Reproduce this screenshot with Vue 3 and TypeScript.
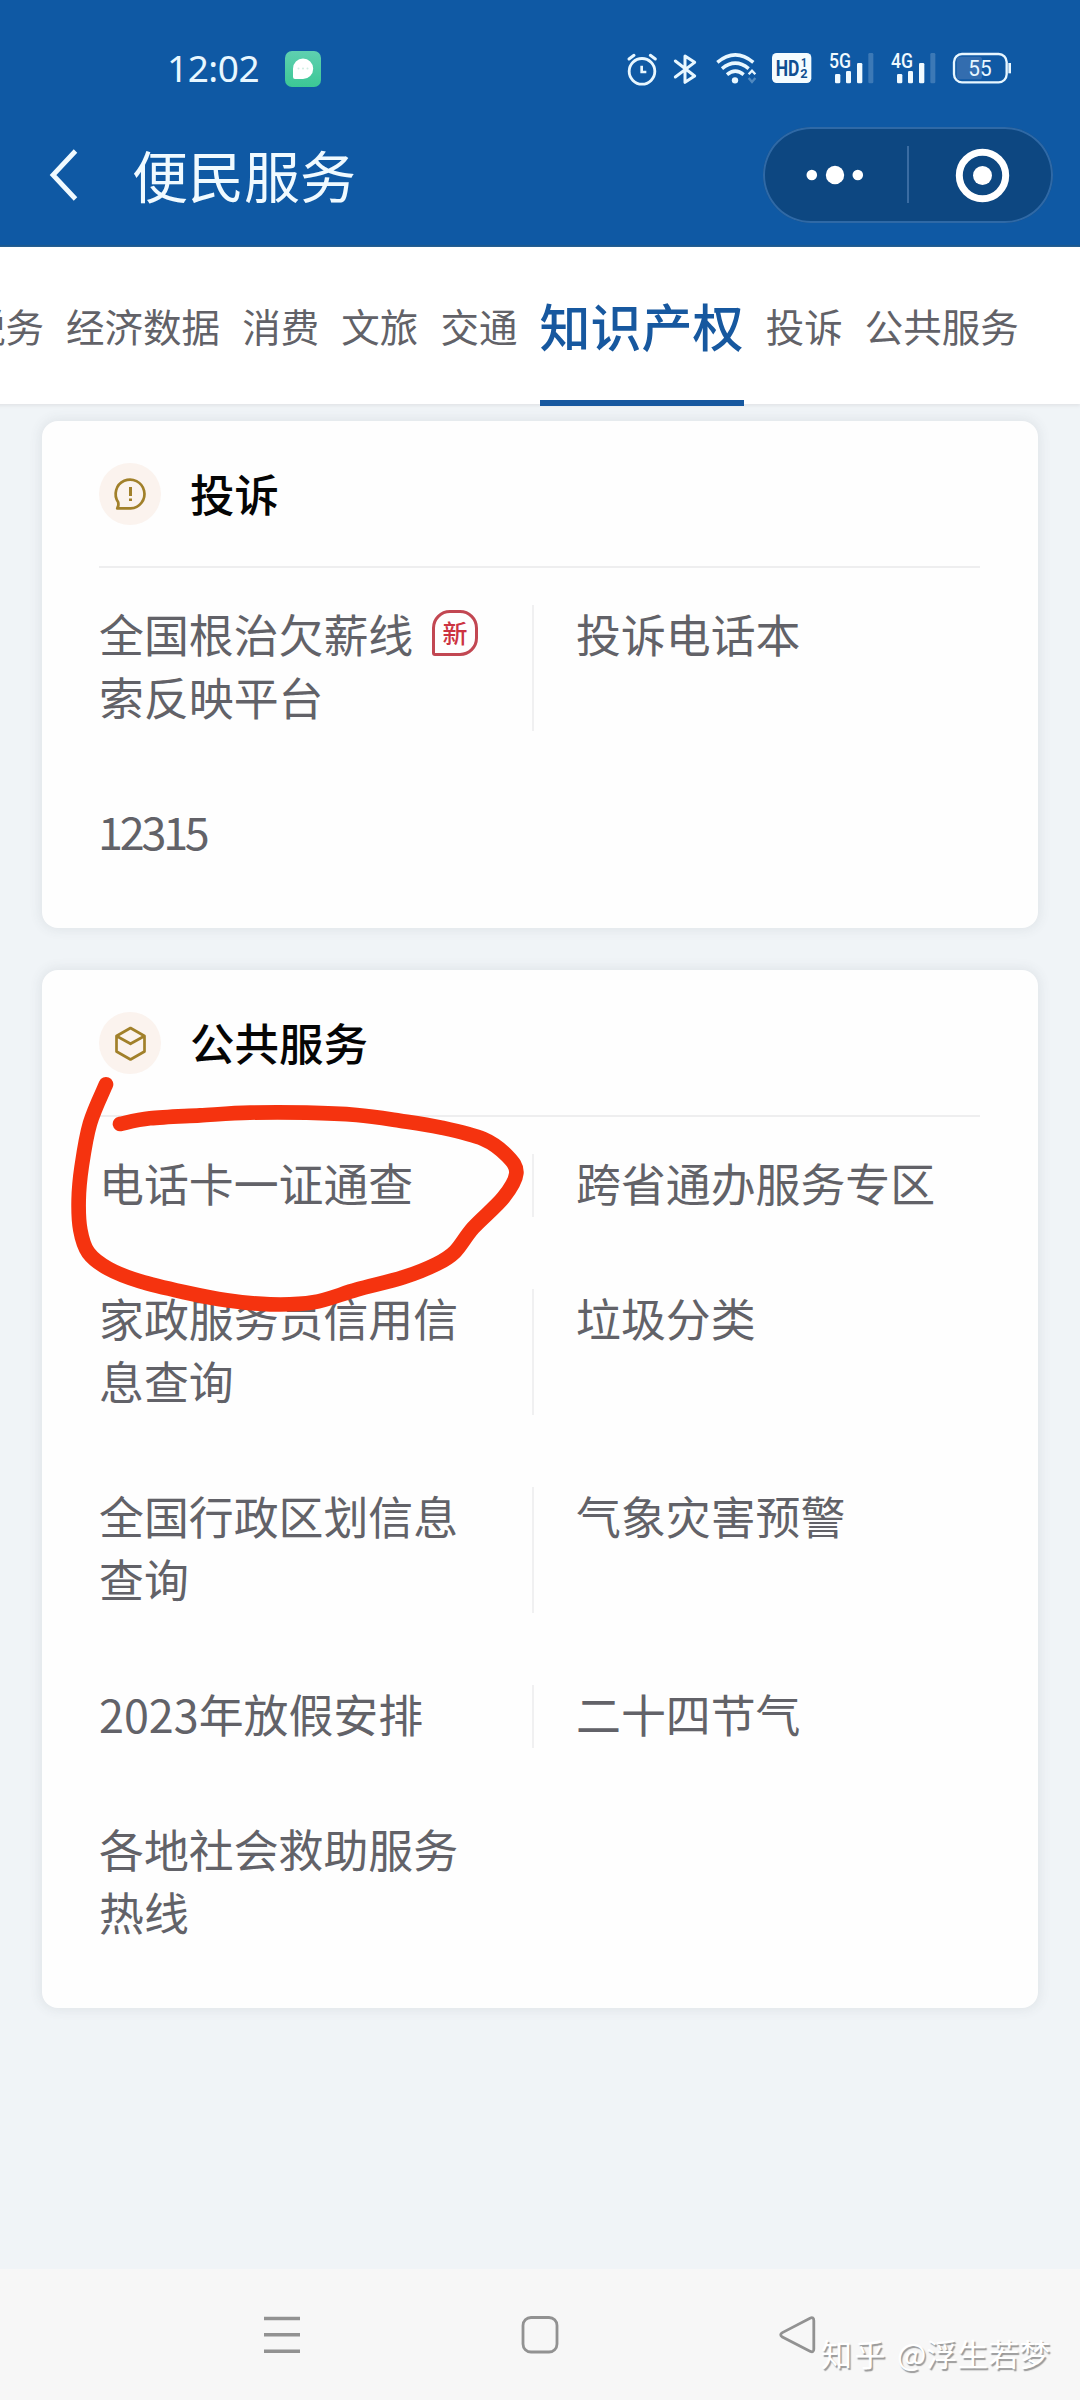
<script setup lang="ts">
interface ServiceItem {
  label: string
  isNew?: boolean
  numeric?: boolean
}

interface ServiceSection {
  title: string
  icon: 'complaint' | 'box'
  rows: ServiceItem[][]
}

const tabs: string[] = ['税务', '经济数据', '消费', '文旅', '交通', '知识产权', '投诉', '公共服务']
const activeTab = '知识产权'

const sections: ServiceSection[] = [
  {
    title: '投诉',
    icon: 'complaint',
    rows: [
      [{ label: '全国根治欠薪线索反映平台', isNew: true }, { label: '投诉电话本' }],
      [{ label: '12315', numeric: true }],
    ],
  },
  {
    title: '公共服务',
    icon: 'box',
    rows: [
      [{ label: '电话卡一证通查' }, { label: '跨省通办服务专区' }],
      [{ label: '家政服务员信用信息查询' }, { label: '垃圾分类' }],
      [{ label: '全国行政区划信息查询' }, { label: '气象灾害预警' }],
      [{ label: '2023年放假安排' }, { label: '二十四节气' }],
      [{ label: '各地社会救助服务热线' }],
    ],
  },
]

// Points of the hand-drawn marker stroke
const strokePoints: [number, number][] = [
  [198, 373], [150, 490], [125, 620], [116, 720], [121, 810], [145, 878], [205, 926],
  [300, 964], [430, 996], [560, 1021], [690, 1033], [820, 1027], [950, 989], [1090, 952],
  [1190, 912], [1245, 875], [1300, 803], [1390, 713], [1429, 640], [1402, 588], [1330, 537],
  [1200, 502], [1080, 482], [950, 465], [800, 458], [630, 458], [480, 466], [330, 475], [240, 492],
]

// Catmull-Rom spline through the points, written as cubic Béziers
function smooth(p: [number, number][]): string {
  let d = `M${p[0][0]} ${p[0][1]}`
  for (let i = 0; i < p.length - 1; i++) {
    const a = p[Math.max(i - 1, 0)]
    const b = p[i]
    const c = p[i + 1]
    const e = p[Math.min(i + 2, p.length - 1)]
    d += `C${b[0] + (c[0] - a[0]) / 6} ${b[1] + (c[1] - a[1]) / 6} ${c[0] - (e[0] - b[0]) / 6} ${c[1] - (e[1] - b[1]) / 6} ${c[0]} ${c[1]}`
  }
  return d
}
const markerPath = smooth(strokePoints)
</script>

<template>
  <div class="screen">
    <header class="header">
      <div class="status">
        <span class="clock">12:02</span>
        <svg class="msg" viewBox="0 0 36 36">
          <defs>
            <linearGradient id="msgbg" x1="0" y1="0" x2="0" y2="1">
              <stop offset="0" stop-color="#5fd0b0" />
              <stop offset="1" stop-color="#3cc795" />
            </linearGradient>
          </defs>
          <rect width="36" height="36" rx="7" fill="url(#msgbg)" />
          <path d="M18 7.5a10.2 10.2 0 1 1 0 20.4H10a2 2 0 0 1-2-2V17.7A10.2 10.2 0 0 1 18 7.5z" fill="#fff" />
          <g fill="#cfeee2"><circle cx="13.5" cy="17.5" r="1" /><circle cx="18" cy="17.5" r="1" /><circle cx="22.5" cy="17.5" r="1" /></g>
        </svg>
        <div class="indicators">
          <svg width="32" height="40" viewBox="18 30 96 120" fill="none" stroke="#e8f7ff" stroke-linecap="round">
            <circle cx="66" cy="94" r="38.5" stroke-width="8.5" />
            <path d="M27 57L42 46M91 46L106 57" stroke-width="9" />
            <path d="M65 77V96H79" stroke-width="8" stroke-linecap="butt" />
          </svg>
          <svg class="bt" width="26" height="40" viewBox="156 30 78 120" fill="none" stroke="#e8f7ff" stroke-width="9">
            <path d="M166 63L224 108L195 127V48L224 67L166 111" stroke-linejoin="round" stroke-linecap="round" />
          </svg>
          <svg class="wifi" width="43" height="40" viewBox="285 30 129 120" fill="none" stroke="#e8f7ff" stroke-width="10.5">
            <path d="M292 67Q346 22 400 67M306 86Q346 53 386 86M321 104Q346 83 371 104" />
            <circle cx="345" cy="121" r="9.5" fill="#e8f7ff" stroke="none" />
            <path d="M386 103L396 92L406 103" stroke-width="7" />
            <path d="M386 114L396 126L406 114" stroke-width="7" opacity=".3" />
          </svg>
          <svg class="hd" width="41" height="40" viewBox="453 30 123 120">
            <rect x="456" y="39" width="118" height="90" rx="14" fill="#f4fcff" />
            <text x="467" y="108" font-size="67" font-weight="700" textLength="71" lengthAdjust="spacingAndGlyphs" fill="#0f4f91">HD</text>
            <text x="543" y="80" font-size="38" font-weight="700" textLength="18" lengthAdjust="spacingAndGlyphs" fill="#0f4f91">1</text>
            <text x="541" y="115" font-size="38" font-weight="700" textLength="22" lengthAdjust="spacingAndGlyphs" fill="#0f4f91">2</text>
          </svg>
          <svg class="sig5" width="47" height="40" viewBox="624 30 141 120" fill="#f0faff">
            <text x="627" y="83" font-size="59" font-weight="500" textLength="66" lengthAdjust="spacingAndGlyphs">5G</text>
            <rect x="645" y="102" width="16" height="28" rx="4" /><rect x="678" y="93" width="15" height="37" rx="4" />
            <rect x="711" y="69" width="16" height="61" rx="4" /><rect x="745" y="39" width="15" height="91" rx="4" opacity=".2" />
          </svg>
          <svg class="sig4" width="47" height="40" viewBox="810 30 141 120" fill="#f0faff">
            <text x="813" y="83" font-size="59" font-weight="500" textLength="66" lengthAdjust="spacingAndGlyphs">4G</text>
            <rect x="831" y="102" width="16" height="28" rx="4" /><rect x="864" y="93" width="15" height="37" rx="4" />
            <rect x="897" y="69" width="16" height="61" rx="4" /><rect x="931" y="39" width="15" height="91" rx="4" opacity=".2" />
          </svg>
          <svg class="bat" width="60" height="40" viewBox="996 30 180 120">
            <rect x="1010" y="50" width="76" height="68" rx="8" fill="#336daf" />
            <rect x="1002" y="42" width="158" height="85" rx="24" fill="none" stroke="#e8f7ff" stroke-width="7" />
            <rect x="1165" y="69" width="8" height="31" fill="#e8f7ff" />
            <text x="1045" y="107" font-size="64" textLength="70" lengthAdjust="spacingAndGlyphs" fill="#e8f7ff">55</text>
          </svg>
        </div>
      </div>
      <div class="titlebar">
        <svg class="back" viewBox="0 0 30 56"><path d="M25.5 4L3 28L25.5 52" fill="none" stroke="#f0faff" stroke-width="4.8" /></svg>
        <h1>便民服务</h1>
        <div class="capsule">
          <svg width="290" height="96" viewBox="0 0 290 96" fill="#fff">
            <circle cx="48.8" cy="48" r="5.3" /><circle cx="72" cy="48" r="9.2" /><circle cx="94.8" cy="48" r="5.3" />
            <rect x="144" y="19" width="2" height="57" fill="#3a6ca2" />
            <circle cx="219.5" cy="48.5" r="23.2" fill="none" stroke="#fff" stroke-width="7" />
            <circle cx="219.5" cy="48.5" r="9.5" />
          </svg>
        </div>
      </div>
    </header>

    <nav class="tabs">
      <span v-for="t in tabs" :key="t" class="tab" :class="{ active: t === activeTab }"><b>{{ t }}</b></span>
    </nav>

    <main class="content">
      <section v-for="s in sections" :key="s.title" class="card">
        <div class="card-head">
          <span class="badge">
            <svg v-if="s.icon === 'complaint'" width="62" height="62" viewBox="0 0 62 62" fill="none" stroke="#a1802a" stroke-width="2.7">
              <path d="M19.2 39.2A14.4 14.4 0 1 1 31.6 45.4H18.2Q20 43 19.2 39.2z" stroke-linejoin="round" />
              <path d="M31.5 24V33M31.5 35.5V38" stroke-width="3" />
            </svg>
            <svg v-else width="62" height="62" viewBox="0 0 62 62" fill="none" stroke="#a1802a" stroke-width="2.7" stroke-linejoin="round">
              <path d="M31.5 16L45.5 24V39.5L31.5 47.5L17.5 39.5V24z M17.5 24L31.5 31.8L45.5 24" />
            </svg>
          </span>
          <h2>{{ s.title }}</h2>
        </div>
        <div class="rows">
          <div v-for="(row, i) in s.rows" :key="i" class="row">
            <div v-for="item in row" :key="item.label" class="item">
              <span class="label" :class="{ narrow: item.isNew, numeric: item.numeric }">{{ item.label }}</span>
              <span v-if="item.isNew" class="new">新</span>
            </div>
          </div>
        </div>
      </section>
    </main>

    <svg class="marker" width="520" height="460" viewBox="0 0 1560 1380">
      <path :d="markerPath" fill="none" stroke="#f5330f" stroke-width="44" stroke-linecap="round" stroke-linejoin="round" />
    </svg>

    <footer class="sysnav">
      <svg width="40" height="40" viewBox="0 0 40 40" stroke="#929292" stroke-width="3.4"><path d="M2 3.5H38M2 19.8H38M2 36.2H38" /></svg>
      <svg width="40" height="40" viewBox="0 0 40 40" fill="none" stroke="#929292" stroke-width="2.8"><rect x="3" y="2.5" width="34" height="34.5" rx="8" /></svg>
      <svg width="40" height="40" viewBox="0 0 40 40" fill="none" stroke="#929292" stroke-width="2.8"><path d="M32 3.2Q35.8 1.6 35.8 5.6V34.1Q35.8 38.1 32 36.2L4.4 22.1Q1 19.8 4.4 17.6z" /></svg>
      <div class="watermark"><span class="site">知乎</span><span>@浮生若梦</span></div>
    </footer>
  </div>
</template>

<style>
body {
  margin: 0;
  background: #f0f4f7;
}
</style>

<style scoped>
.screen {
  position: relative;
  width: 1080px;
  height: 2400px;
  overflow: hidden;
  display: flex;
  flex-direction: column;
  background: #f0f4f7;
  font-family: "Noto Sans CJK SC", "Noto Sans", sans-serif;
  color: #626268;
}
svg {
  display: block;
  flex: none;
  overflow: visible;
}
svg text {
  font-family: Roboto, sans-serif;
}
.header {
  height: 247px;
  background: #0f59a4;
  box-sizing: border-box;
  border-bottom: 2px solid #1b588f;
  flex: none;
}
.status {
  height: 40px;
  padding: 50px 68px 0 167px;
  display: flex;
  align-items: center;
}
.clock {
  font-family: "Noto Sans", sans-serif;
  font-size: 37px;
  line-height: 40px;
  width: 118px;
  margin-bottom: 5px;
  color: #e8f7ff;
  letter-spacing: -0.5px;
}
.msg {
  width: 36px;
  height: 36px;
  margin-bottom: 2px;
}
.indicators {
  display: flex;
  margin-left: auto;
}
.bt { margin-left: 14px; }
.wifi { margin-left: 17px; }
.hd { margin-left: 13px; }
.sig5 { margin-left: 16px; }
.sig4 { margin-left: 15px; }
.bat { margin-left: 15px; }
.titlebar {
  height: 96px;
  margin-top: 37px;
  padding: 0 27px 0 50px;
  display: flex;
  align-items: center;
}
.back {
  width: 30px;
  height: 56px;
}
h1 {
  margin: 0 auto 2px 52px;
  font-size: 56px;
  line-height: 80px;
  font-weight: 400;
  color: #f0faff;
}
.capsule {
  width: 290px;
  height: 96px;
  border-radius: 48px;
  background: #0d4781;
  box-shadow: inset 0 0 0 2px #2f69a6;
}
.tabs {
  height: 157px;
  flex: none;
  background: #fff;
  display: flex;
  gap: 22.1px;
  margin-left: -33px;
  box-shadow: 0 2px 3px #e3e5e8;
  position: relative;
}
.tab {
  flex: none;
  height: 159px;
  box-sizing: border-box;
  font-size: 38.5px;
  line-height: 157px;
  white-space: nowrap;
}
.tab b {
  font-weight: 400;
}
.tab.active {
  font-size: 51px;
  color: #17589f;
  border-bottom: 6px solid #17589f;
}
.tab.active b {
  font-weight: 500;
}
.content {
  padding: 17px 42px 0;
  display: flex;
  flex-direction: column;
  gap: 42px;
}
.card {
  background: #fefefe;
  border-radius: 16px;
  box-shadow: 0 0 12px 2px rgba(70, 80, 90, 0.09);
  padding: 0 58px 62px 57px;
}
.card-head {
  height: 147px;
  box-sizing: border-box;
  border-bottom: 2px solid #eeeeef;
  display: flex;
  align-items: center;
  gap: 29px;
}
.badge {
  width: 62px;
  height: 62px;
  border-radius: 50%;
  background: #fbf3ee;
}
h2 {
  margin: 0 0 1px;
  font-size: 44.5px;
  line-height: 62px;
  font-weight: 500;
  color: #050505;
}
.rows {
  padding-top: 37px;
  display: flex;
  flex-direction: column;
  gap: 72px;
}
.row {
  display: grid;
  grid-template-columns: 433px 1fr;
}
.item {
  display: flex;
}
.item + .item {
  border-left: 2px solid #f0f0f1;
  padding-left: 42px;
}
.label {
  margin: -3px 0 3px;
  font-size: 44.9px;
  line-height: 63px;
  width: 361px;
}
.label.narrow {
  width: 316px;
}
.label.numeric {
  margin: -4px 0 4px -1px;
  letter-spacing: -3.2px;
}
.item + .item .label {
  width: auto;
}
.new {
  width: 46px;
  height: 46px;
  box-sizing: border-box;
  margin: 5px 0 0 17px;
  border: 3px solid #c24752;
  border-radius: 18px 18px 18px 3px;
  font-size: 25px;
  line-height: 39px;
  text-align: center;
  color: #cc3341;
  font-weight: 500;
}
.marker {
  position: absolute;
  left: 40px;
  top: 960px;
}
.sysnav {
  margin-top: auto;
  height: 131px;
  flex: none;
  background: #f7f7f7;
  position: relative;
  display: flex;
  align-items: center;
  gap: 218px;
  padding-left: 262px;
}
.watermark {
  position: absolute;
  left: 821px;
  top: 62px;
  display: flex;
  gap: 9px;
  font-size: 31px;
  line-height: 44px;
  color: #fff;
  text-shadow: 1.5px 1.5px 1px #999;
  white-space: nowrap;
}
.site {
  letter-spacing: 2.5px;
}
</style>
